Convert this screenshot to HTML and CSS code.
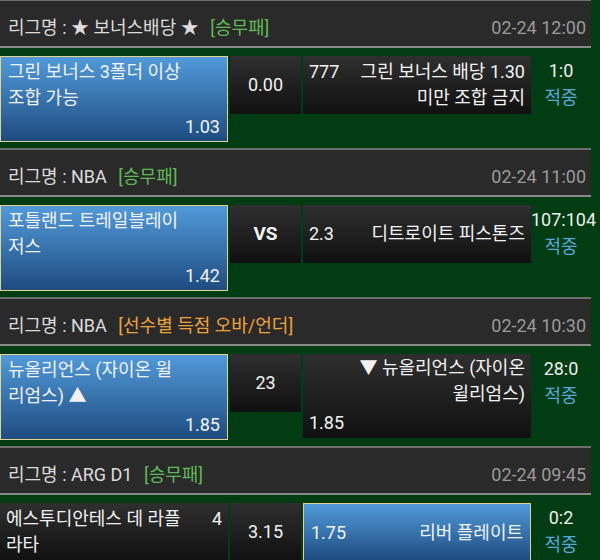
FILE: index.html
```html
<!DOCTYPE html>
<html>

<head>
    <title>경기 결과</title>
    <link rel="stylesheet" href="styles.css">
</head>

<body>
    <div class="list">
        <div class="game">
            <div class="league">
                <span class="title">리그명 : ★ 보너스배당 ★ <span class="type">[승무패]</span></span>
                <span class="time">02-24 12:00</span>
            </div>
            <div class="match">
                <div class="pick on">
                    <div class="name">그린 보너스 3폴더 이상 조합 가능</div>
                    <div class="odds">1.03</div>
                </div>
                <div class="pick mid">0.00</div>
                <div class="pick">
                    <div class="row">
                        <span class="odds">777</span>
                        <span class="name">그린 보너스 배당 1.30 미만 조합 금지</span>
                    </div>
                </div>
                <div class="score">1:0<br><span class="hit">적중</span></div>
            </div>
        </div>

        <div class="game">
            <div class="league">
                <span class="title">리그명 : NBA <span class="type">[승무패]</span></span>
                <span class="time">02-24 11:00</span>
            </div>
            <div class="match">
                <div class="pick on">
                    <div class="name">포틀랜드 트레일블레이저스</div>
                    <div class="odds">1.42</div>
                </div>
                <div class="pick mid vs">VS</div>
                <div class="pick">
                    <div class="row">
                        <span class="odds">2.3</span>
                        <span class="name">디트로이트 피스톤즈</span>
                    </div>
                </div>
                <div class="score">107:104<br><span class="hit">적중</span></div>
            </div>
        </div>

        <div class="game">
            <div class="league">
                <span class="title">리그명 : NBA <span class="type special">[선수별 득점 오바/언더]</span></span>
                <span class="time">02-24 10:30</span>
            </div>
            <div class="match">
                <div class="pick on">
                    <div class="name">뉴올리언스 (자이온 윌리엄스) ▲</div>
                    <div class="odds">1.85</div>
                </div>
                <div class="pick mid">23</div>
                <div class="pick">
                    <div class="name right">▼ 뉴올리언스 (자이온 윌리엄스)</div>
                    <div class="odds left">1.85</div>
                </div>
                <div class="score">28:0<br><span class="hit">적중</span></div>
            </div>
        </div>

        <div class="game">
            <div class="league">
                <span class="title">리그명 : ARG D1 <span class="type">[승무패]</span></span>
                <span class="time">02-24 09:45</span>
            </div>
            <div class="match">
                <div class="pick">
                    <div class="row">
                        <span class="name">에스투디안테스 데 라플라타</span>
                        <span class="odds">4</span>
                    </div>
                </div>
                <div class="pick mid">3.15</div>
                <div class="pick on">
                    <div class="row">
                        <span class="odds">1.75</span>
                        <span class="name">리버 플레이트</span>
                    </div>
                </div>
                <div class="score">0:2<br><span class="hit">적중</span></div>
            </div>
        </div>
    </div>
</body>

</html>
```

FILE: styles.css
```css
html,
body {
    overflow: hidden;
}

body {
    margin: 0;
    background-color: #023c12;
    font-family: Roboto, "Noto Sans CJK KR", sans-serif;
    font-size: 18px;
    color: #f2f2f2;
}

.list {
    width: 591px;
    margin-top: -1px;
}

.league {
    display: flex;
    justify-content: space-between;
    background-color: #2a2a2a;
    border-top: 2px solid #6e6e6e;
    border-bottom: 2px solid #8a8a8a;
    padding: 14px 5px 5px 8px;
    line-height: 26px;
}

.title {
    color: #dcdcdc;
}

.type {
    margin-left: 7px;
    color: #5fba55;
}

.type.special {
    color: #f0a23a;
}

.time {
    color: #9a9a9a;
}

.match {
    display: flex;
    align-items: flex-start;
    padding: 8px 0 6px;
}

.pick {
    box-sizing: border-box;
    width: 228px;
    min-height: 58px;
    padding: 1px 6px 2px;
    display: flex;
    flex-direction: column;
    justify-content: center;
    line-height: 26px;
    background: linear-gradient(#2f2f2f, #101010);
}

.pick.on {
    background: linear-gradient(#519ad9, #1e4c80);
    border: 1px solid #e4d38d;
    padding: 2px 7px 1px;
}

.pick.mid {
    width: 71px;
    margin: 0 2px;
    align-items: center;
}

.pick.vs {
    font-weight: bold;
    font-size: 19px;
}

.name {
    max-width: 177px;
}

.name.right {
    align-self: flex-end;
    text-align: right;
}

.odds {
    text-align: right;
    margin-top: 3px;
}

.odds.left {
    text-align: left;
}

.row {
    display: flex;
    justify-content: space-between;
    align-items: flex-start;
}

.row .odds {
    margin-top: 0;
}

.row .name:last-child {
    text-align: right;
}

.score {
    width: 60px;
    padding-top: 1px;
    text-align: center;
    line-height: 27px;
    white-space: nowrap;
    color: #eeeeee;
}

.hit {
    color: #58a8dc;
}
```
